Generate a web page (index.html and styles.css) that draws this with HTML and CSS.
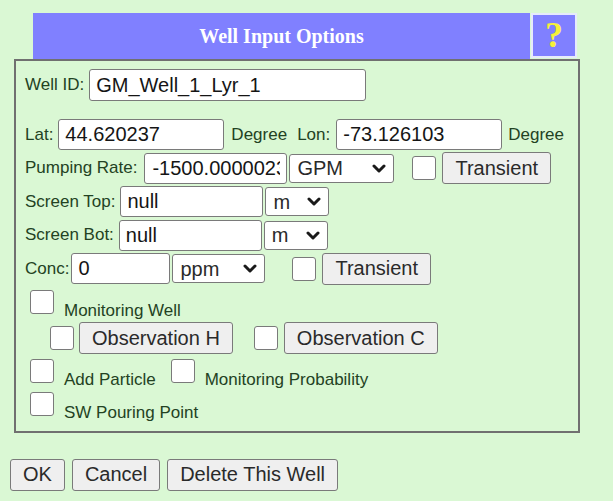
FILE: index.html
```html
<!DOCTYPE html>
<html lang="en">
<head>
<meta charset="utf-8">
<title>Well Input Options</title>
<link rel="stylesheet" href="styles.css">
</head>
<body>
<div class="page">
  <div class="titlebar">
    <div class="title">Well Input Options</div>
    <div class="help">?</div>
  </div>
  <div class="box">
    <div class="row row-id">
      <label class="lbl">Well ID:</label>
      <input class="txt w-id" type="text" value="GM_Well_1_Lyr_1">
    </div>
    <div class="row row-lat">
      <label class="lbl">Lat:</label>
      <input class="txt w-coord" type="text" value="44.620237">
      <span class="unit">Degree</span>
      <label class="lbl lbl-lon">Lon:</label>
      <input class="txt w-coord" type="text" value="-73.126103">
      <span class="unit unit-end">Degree</span>
    </div>
    <div class="row">
      <label class="lbl lbl-wide">Pumping Rate:</label>
      <input class="txt w-mid w-pump" type="text" value="-1500.00000232">
      <span class="sel w-gpm">
        <select><option>GPM</option></select>
        <svg class="chev" width="14" height="9" viewBox="0 0 14 9"><polyline points="2,2 7,7 12,2" fill="none" stroke="#1a1a1a" stroke-width="3" stroke-linecap="round" stroke-linejoin="round"/></svg>
      </span>
      <input class="cb cb-pump" type="checkbox">
      <button class="btn" type="button">Transient</button>
    </div>
    <div class="row">
      <label class="lbl">Screen Top:</label>
      <input class="txt w-mid" type="text" value="null">
      <span class="sel w-m">
        <select><option>m</option></select>
        <svg class="chev" width="14" height="9" viewBox="0 0 14 9"><polyline points="2,2 7,7 12,2" fill="none" stroke="#1a1a1a" stroke-width="3" stroke-linecap="round" stroke-linejoin="round"/></svg>
      </span>
    </div>
    <div class="row">
      <label class="lbl">Screen Bot:</label>
      <input class="txt w-mid" type="text" value="null">
      <span class="sel w-m">
        <select><option>m</option></select>
        <svg class="chev" width="14" height="9" viewBox="0 0 14 9"><polyline points="2,2 7,7 12,2" fill="none" stroke="#1a1a1a" stroke-width="3" stroke-linecap="round" stroke-linejoin="round"/></svg>
      </span>
    </div>
    <div class="row">
      <label class="lbl lbl-tight">Conc:</label>
      <input class="txt w-conc" type="text" value="0">
      <span class="sel w-ppm">
        <select><option>ppm</option></select>
        <svg class="chev" width="14" height="9" viewBox="0 0 14 9"><polyline points="2,2 7,7 12,2" fill="none" stroke="#1a1a1a" stroke-width="3" stroke-linecap="round" stroke-linejoin="round"/></svg>
      </span>
      <input class="cb cb-conc" type="checkbox">
      <button class="btn" type="button">Transient</button>
    </div>
    <div class="cbrow cbrow-mw">
      <input class="cb" type="checkbox"><span class="cblbl">Monitoring Well</span>
    </div>
    <div class="obsrow">
      <input class="cb" type="checkbox">
      <button class="btn" type="button">Observation H</button>
      <input class="cb cb-obsc" type="checkbox">
      <button class="btn" type="button">Observation C</button>
    </div>
    <div class="cbrow cbrow-ap">
      <input class="cb" type="checkbox"><span class="cblbl">Add Particle</span><input class="cb cb-mp" type="checkbox"><span class="cblbl">Monitoring Probability</span>
    </div>
    <div class="cbrow cbrow-sw">
      <input class="cb" type="checkbox"><span class="cblbl">SW Pouring Point</span>
    </div>
  </div>
  <div class="actions">
    <button class="btn" type="button">OK</button>
    <button class="btn" type="button">Cancel</button>
    <button class="btn" type="button">Delete This Well</button>
  </div>
</div>
</body>
</html>
```
FILE: styles.css
```css
html, body {
  margin: 0;
  padding: 0;
  background: #daf8d4;
}
body {
  font-family: "Liberation Sans", Arial, sans-serif;
  color: #234223;
}
.page {
  padding: 13px 0 0 10px;
}
.titlebar {
  display: flex;
  align-items: flex-start;
  margin-left: 23px;
  height: 46px;
}
.title {
  width: 497px;
  height: 46px;
  background: #8080ff;
  color: #ffffff;
  font-family: "Liberation Serif", "Times New Roman", serif;
  font-weight: bold;
  font-size: 20px;
  line-height: 46px;
  text-align: center;
}
.help {
  box-sizing: border-box;
  width: 46px;
  height: 45px;
  margin-left: 1px;
  border: 2px solid #e6eafc;
  background: #8080ff;
  color: #f6f03a;
  font-family: "Liberation Serif", "Times New Roman", serif;
  font-weight: bold;
  font-size: 36px;
  line-height: 40px;
  text-align: center;
}
.box {
  box-sizing: border-box;
  width: 566px;
  margin-left: 4px;
  border: 2px solid #707070;
  padding: 8px 0 8px 9px;
}
.row {
  display: flex;
  align-items: center;
  height: 33.5px;
}
.row-id {
  height: 32px;
}
.row-lat {
  margin-top: 17px;
}
.lbl {
  font-size: 17px;
  margin-right: 5px;
  white-space: nowrap;
}
.lbl-wide {
  margin-right: 7px;
}
.lbl-tight {
  margin-right: 2px;
}
.lbl-lon {
  margin-left: 10px;
  margin-right: 6px;
}
.unit {
  font-size: 17px;
  margin-left: 7px;
}
.unit-end {
  margin-left: 6px;
}
.txt {
  box-sizing: border-box;
  height: 31px;
  margin: 0;
  padding: 0 6px;
  border: 1px solid #7a7a7a;
  border-radius: 3px;
  background: #ffffff;
  color: #151515;
  font-family: "Liberation Sans", Arial, sans-serif;
  font-size: 20px;
}
.w-id {
  width: 277px;
  height: 32px;
}
.w-coord {
  width: 166px;
}
.w-mid {
  width: 143px;
}
.w-pump {
  padding-left: 7px;
}
.w-conc {
  width: 99px;
}
.sel {
  position: relative;
  display: inline-flex;
  margin-left: 2px;
}
.sel select {
  -webkit-appearance: none;
  appearance: none;
  box-sizing: border-box;
  width: 100%;
  height: 29px;
  margin: 0;
  padding: 0 0 0 7px;
  border: 1px solid #7a7a7a;
  border-radius: 3px;
  background: #ffffff;
  color: #2a2a2a;
  font-family: "Liberation Sans", Arial, sans-serif;
  font-size: 20px;
}
.w-gpm {
  width: 105px;
}
.w-m {
  width: 64px;
}
.w-ppm {
  width: 93px;
}
.chev {
  position: absolute;
  right: 8px;
  top: 10px;
  pointer-events: none;
}
.cb {
  -webkit-appearance: none;
  appearance: none;
  box-sizing: border-box;
  width: 24px;
  height: 24px;
  margin: 0;
  border: 1px solid #7a7a7a;
  border-radius: 3px;
  background: #ffffff;
}
.cb-pump {
  margin-left: 18px;
  margin-right: 6px;
}
.cb-conc {
  margin-left: 27px;
  margin-right: 6px;
}
.btn {
  box-sizing: border-box;
  height: 32px;
  margin: 0;
  padding: 0 12px;
  border: 1px solid #7a7a7a;
  border-radius: 3px;
  background: #efefef;
  color: #2a2a2a;
  font-family: "Liberation Sans", Arial, sans-serif;
  font-size: 20px;
  white-space: nowrap;
}
.cbrow {
  font-size: 17px;
  line-height: 20px;
  padding-left: 5px;
  white-space: nowrap;
}
.cbrow .cb {
  vertical-align: baseline;
  margin: 0 10px 2px 0;
}
.cbrow .cb-mp {
  margin-left: 15px;
}
.cbrow-mw {
  margin-top: 4.5px;
}
.cbrow-ap {
  margin-top: 4.5px;
}
.cbrow-sw {
  margin-top: 2px;
}
.obsrow {
  display: flex;
  align-items: center;
  height: 32px;
  margin-top: 1px;
  padding-left: 25px;
}
.obsrow .cb {
  margin-right: 5px;
}
.obsrow .cb-obsc {
  margin-left: 21px;
  margin-right: 6px;
}
.actions {
  display: flex;
  gap: 7px;
  margin-top: 26px;
}
```
